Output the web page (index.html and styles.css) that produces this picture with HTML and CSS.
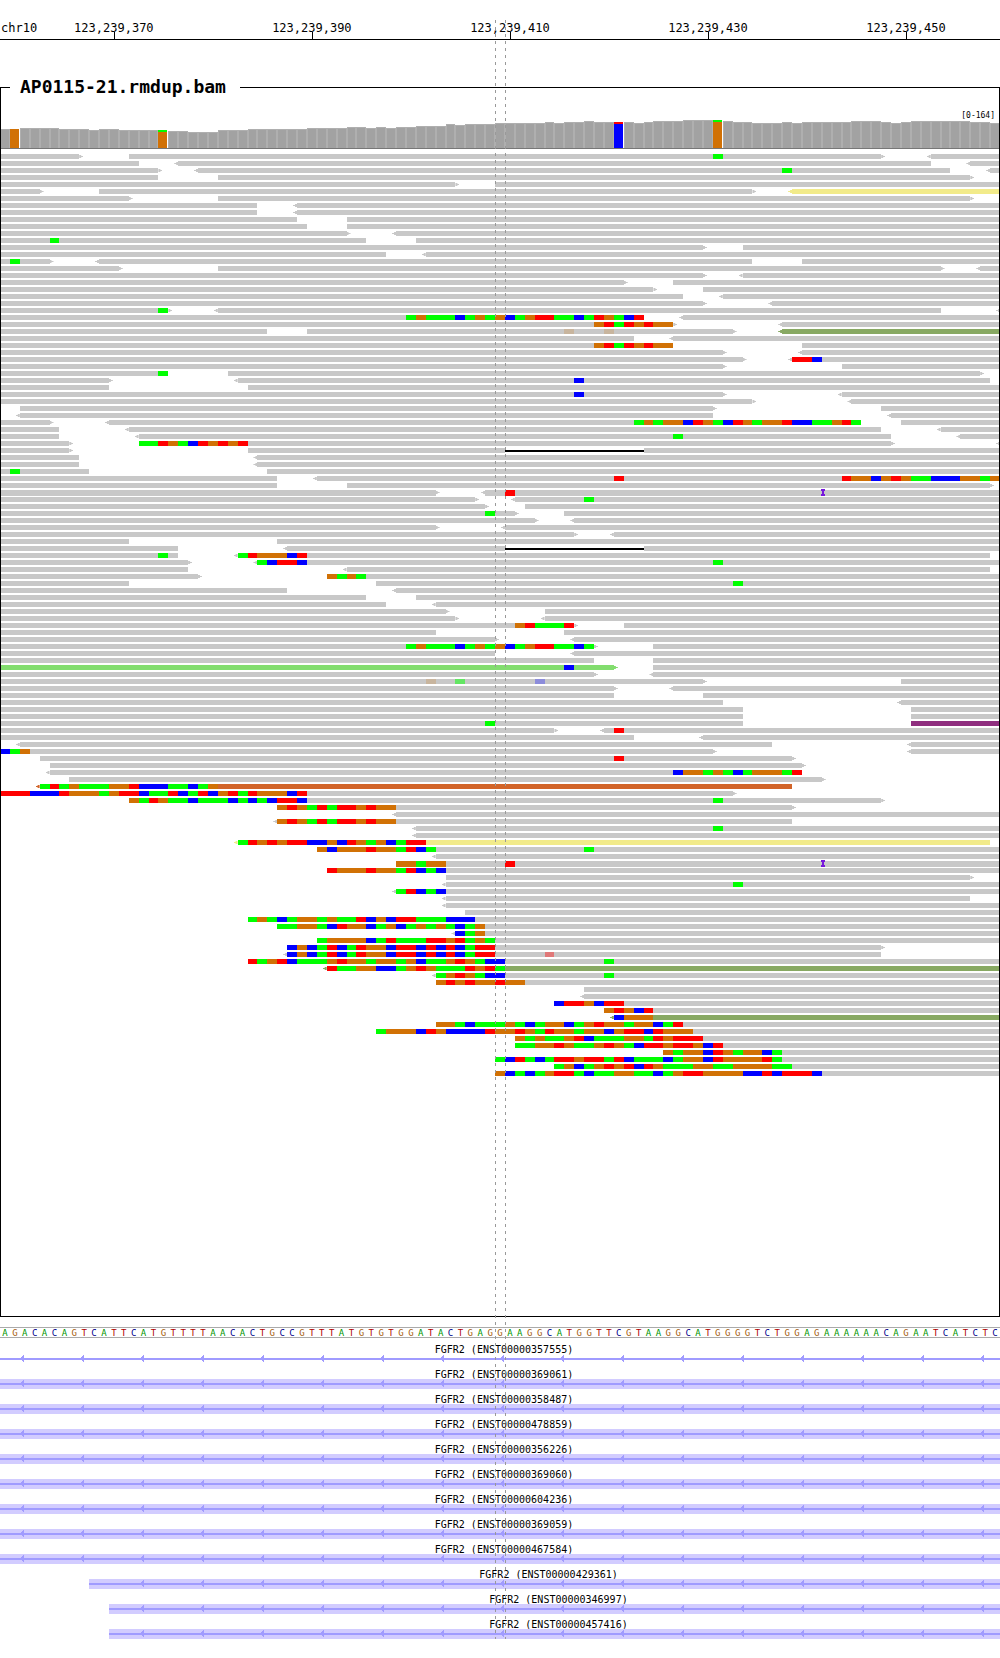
FILE: index.html
```html
<!DOCTYPE html>
<html lang="en">
<head>
<meta charset="utf-8">
<title>AP0115-21.rmdup.bam</title>
<link rel="stylesheet" href="styles.css">
</head>
<body>
<main class="browser">
  <header class="ruler" id="ruler"><span class="chrom">chr10</span></header>
  <fieldset class="track">
    <legend>AP0115-21.rmdup.bam</legend>
    <div class="range">[0-164]</div>
    <div class="coverage columns" id="coverage"></div>
    <div class="lanes" id="lanes"></div>
  </fieldset>
  <div class="sequence columns" id="sequence"></div>
  <section class="genes" id="genes"></section>
  <div class="guide guide-start"></div>
  <div class="guide guide-end"></div>
</main>
<script src="script.js"></script>
</body>
</html>
```
FILE: styles.css
```css
body {
  margin: 0;
  background: #fff;
  color: #000;
  font-family: "DejaVu Sans Mono", monospace;
}

.browser {
  position: relative;
  overflow: hidden;
}

.columns,
.ruler,
.lane {
  display: grid;
  grid-template-columns: repeat(101, minmax(0, 1fr));
}

/* Ruler */
.ruler {
  height: 39px;
  border-bottom: 1px solid #000;
  font-size: 12px;
  line-height: 14px;
}

.chrom,
.tick {
  grid-row: 1;
  padding-top: 21px;
  white-space: nowrap;
}

.chrom {
  grid-column: 1 / 6;
  padding-left: 1px;
}

.tick {
  position: relative;
  display: flex;
  justify-content: center;
}

.tick::after {
  content: "";
  position: absolute;
  left: 50%;
  bottom: 0;
  width: 1px;
  height: 7px;
  background: #000;
}

/* Alignment track */
.track {
  position: relative;
  min-width: 0;
  margin: 37px 0 0;
  padding: 0 0 238px;
  border: solid #000;
  border-width: 1px 0;
}

/* Side borders, reaching up to the line beside the legend */
.track::after {
  content: "";
  position: absolute;
  inset: -10px 0 0;
  border: solid #000;
  border-width: 0 1px;
}

.track legend {
  margin-left: 10px;
  padding: 0 14px 2px 10px;
  font-size: 18px;
  font-weight: bold;
  line-height: 19px;
}

.range {
  height: 22px;
  padding-right: 5px;
  font-size: 8px;
  line-height: 36px;
  text-align: right;
}

.coverage {
  height: 28px;
  align-items: end;
  border-bottom: 1px solid #777;
}

.depth {
  box-sizing: border-box;
  border: solid #afafaf;
  border-width: 1px 1px 0;
  background: #a2a2a2;
}

.depth.variant {
  margin-right: 1px;
  border: 0;
}

.lanes {
  padding-top: 5px;
}

.lane {
  height: 5px;
  margin-bottom: 2px;
}

.lane > * {
  grid-row: 1;
}

.read {
  position: relative;
  background: #c8c8c8;
}

.read.yellow { background: #f2eb8a; }
.read.olive { background: #88a963; }
.read.green { background: #82dd6e; }
.read.purple { background: #8f2e7f; }
.read.orange { background: #d26428; }

.forward::after,
.reverse::before {
  content: "";
  position: absolute;
  top: 1px;
  width: 4px;
  height: 3px;
  background: inherit;
}

.forward::after {
  left: 100%;
  clip-path: polygon(0 0, 2px 0, 2px 1px, 4px 1px, 4px 2px, 2px 2px, 2px 3px, 0 3px);
}

.reverse::before {
  right: 100%;
  clip-path: polygon(4px 0, 2px 0, 2px 1px, 0 1px, 0 2px, 2px 2px, 2px 3px, 4px 3px);
}

.base { position: relative; }
.base-A { background: #00ff00; }
.base-C { background: #0000ff; }
.base-G { background: #d17105; }
.base-T { background: #ff0000; }
.base-a { background: #63e663; }
.base-c { background: #8c8cdb; }
.base-g { background: #c8b59e; }
.base-t { background: #e07878; }

.deletion {
  height: 2px;
  margin-top: 2px;
  background: #000;
}

.insertion {
  position: relative;
  display: block;
  width: 4px;
  height: 7px;
  margin: -1px 0 0 -1px;
  fill: #7719dc;
}

/* Reference sequence */
.sequence {
  margin-top: 10px;
  border: solid #aaa;
  border-width: 1px 0;
  height: 9px;
  font-size: 9px;
  line-height: 10px;
  text-align: center;
}

.letter-A { color: #009600; }
.letter-C { color: #00008b; }
.letter-G { color: #a5600f; }
.letter-T { color: #b00000; }

/* Transcripts */
.genes {
  padding-top: 1px;
}

.transcript-name {
  height: 15px;
  padding-left: 8px;
  font-size: 10px;
  line-height: 22px;
  text-align: center;
  white-space: nowrap;
}

/* Intron line, with strand arrows built from three stacked columns */
.transcript-body {
  height: 10px;
  background:
    linear-gradient(#a09bff, #a09bff) 0 4px / 100% 2px no-repeat,
    linear-gradient(90deg, transparent 21px, #a09bff 21px, #a09bff 24px, transparent 24px) 0 3px / 60px 3px repeat-x,
    linear-gradient(90deg, transparent 22px, #a09bff 22px, #a09bff 24px, transparent 24px) 0 2px / 60px 5px repeat-x,
    linear-gradient(90deg, transparent 23px, #a09bff 23px, #a09bff 24px, transparent 24px) 0 1px / 60px 7px repeat-x;
}

.transcript-body.exon {
  background-color: #d2ccff;
}

/* Dashed guides over the centre base */
.guide {
  position: absolute;
  top: 20px;
  bottom: 0;
  width: 1px;
  background: repeating-linear-gradient(#999 0 3px, transparent 3px 7px);
}

.guide-start { left: calc(100% * 50 / 101); }
.guide-end { left: calc(100% * 51 / 101); }
```
FILE: script.js
```js
const byId = (id) => document.getElementById(id);

function add(parent, className, start, end, text) {
  const el = document.createElement("div");
  el.className = className;
  if (start !== undefined) {
    el.style.gridColumn = `${start + 1} / ${Math.max(end, start + 1) + 1}`;
  }
  if (text) el.textContent = text;
  parent.append(el);
  return el;
}

// Ruler labels, each centred on its base.
[11, 31, 51, 71, 91].forEach((column) => {
  const position = (123239359 + column).toLocaleString("en-US");
  add(byId("ruler"), "tick", column - 6, column + 7, position);
});

// Coverage: runs of [height, number of bases].
const depths = [
  [19, 2], [20, 4], [19, 3], [18, 1], [19, 2], [18, 5], [17, 2], [16, 3], [18, 3],
  [19, 6], [20, 4], [21, 2], [20, 1], [21, 1], [20, 1], [21, 2], [22, 3], [24, 1],
  [23, 1], [24, 3], [25, 5], [26, 1], [25, 1], [26, 2], [27, 1], [26, 4], [25, 1],
  [26, 1], [27, 3], [28, 4], [27, 1], [26, 2], [25, 3], [26, 1], [25, 1], [26, 5],
  [27, 3], [26, 1], [25, 1], [26, 1], [27, 6], [26, 2], [25, 1],
].flatMap(([height, count]) => Array(count).fill(height));

const variants = {
  1: "#d17105",
  16: "linear-gradient(#00ff00 2px, #d17105 2px)",
  62: "linear-gradient(#ff0000 2px, #0000ff 2px)",
  72: "linear-gradient(#00ff00 2px, #d17105 2px)",
};

depths.forEach((height, column) => {
  const bar = add(byId("coverage"), "depth", column, column + 1);
  bar.style.height = `${height}px`;
  if (variants[column]) {
    bar.classList.add("variant");
    bar.style.background = variants[column];
  }
});

// One line per lane. "a-b" is a read, with < or > at its pointed end and an
// optional colour; "n:ACGT" are mismatched bases (lower case: low quality);
// "Da-b" is a deletion and "In" an insertion.
const lanes = `
0-8> 13-89> <94-101 72:A
0-14 <18-94 <98-101
0-16> <20-96 <100-101 79:A
0-16 22-98>
0-46> 50-101
0-4> 10-76> <80-101yellow
0-13> 22-98>
0-26 <30-101
0-26 <30-101
0-30 35-101
0-31 35-101
0-35> <40-101
0-37 42-101 5:A
0-71> 75-101
0-39 <43-101
0-5> <10-76 81-101 1:A
0-12> 22-95> <99-101
0-71> <75-101
0-63> 68-101
0-66> 71-101
0-69 <73-101
0-71> <78-101
0-17> <22-95 <101-101 16:A
0-65 <69-101 41:AGAAACAGAGCAGTTAACATGACT
0-68> <79-101 60:GTATGTGG
0-27 31-74> <79-101olive 57:g 61:g
0-64 <68-101
0-68 81-101 60:GTATGTGG
0-73> <81-101
0-75> <80-101 80:TTC
0-73> 85-101
0-17 23-99> 16:A
0-11> <24-100 58:C
0-11 25-101
0-73> <85-101 58:C
0-76> <86-101
2-72> 89-101
<2-72 <90-101
0-5> <11-87 91-101 64:AGAGGCTGACTGAGGTCCAAGTA
0-6 <13-89 <95-101
0-6 <14-90 <97-101 68:A
0-7> 14-90> <101-101 14:AATGACTGTGT
0-7> 25-51 D51-65 65-101
0-8 <26-101
0-8 <26-101
0-9 27-101 1:A
0-28 <32-101 62:T 85:TGGCGTGAACCCGGAG
0-28 35-100>
0-44> <49-101 51:T I83
0-48> <52-101 59:A
0-49> 53-101
0-52> 57-101 49:A
0-54> <58-101
0-44> <51-101
0-58> <62-101
0-13 28-101
0-18 <29-51 D51-65 65-101
0-18 <24-100 16:A 24:ATGGGCT
0-19> <26-101 26:ACTTC 72:A
0-19 <35-100
0-20> 33-101 33:GAGA
0-13 38-101 74:A
0-29 <40-101
0-37 42-101
0-39 <44-101
0-45> 55-101
0-46> <55-101
0-58> 63-101 52:GTAAAT
0-44 57-101
0-50> <58-101
0-60> 66-101 41:AGAAACAGAGCAGTTAACA
0-50 <58-101
0-60 66-101
0-62>green 66-101 57:C
0-60> <66-101
0-71> 91-101 43:g 46:a 54:c
0-62> <68-101
0-62 71-101
0-73 <91-101
0-75 92-101
0-75 92-101
0-75 92-101purple 49:A
0-56> <61-101 62:T
0-64 <71-101
<2-78 <92-101
0-72> <92-101 0:CAG
4-80> 62:T
5-81>
<5-81 68:CGGAGACAGGGAT
7-83>
<4-80orange 4:ATAGAAAGGTCCCAACAG
0-74> 0:TTTCCCTGGGAGTTCAATCATCGTATGGGCT
13-89> 13:GATGAACAAACACACTTC 72:A
28-80> 28:GTGATATTGTGG
<40-101
<28-80 28:GTGATATTGTGG
<42-101 72:A
<42-101
<24-100yellow 24:ATGTGTTCCGCTGAGCATT
32-101 32:GCGGGTGGATCA 59:A
<44-101
40-101 40:GGAGG 51:T I83
33-101 33:TGGGTGGATCAC
45-98>
<45-101 74:A
<40-101 40:ATCAC
<45-98
<45-101
47-101
25-101 25:AGACAGGAGAATCGCTTAAACCC
28-101 28:AAGGACTGGCAGCAGAGACAG
<46-101 46:CAG
32-101 32:AGGGGCATAAATTGTAGA
29-89> 29:CGCATCATGGCTTCTCTCATT
<29-89 29:CGCATCATGGCTTCTCTCATT 55:t
25-101 25:TAGTCAAAGTGGAGGAGCAAGTGACC 61:A
<33-101olive 33:TAAGGCCAGTGAAATGTA
<44-101 44:AGTGACC 61:A
44-101 44:GTGTGGTGG
59-101
<59-101
56-101 56:CTTGCTT
61-101 61:GTGCT
<62-101olive 62:CGGG
44-101 44:GGACAAAGACAGGCAGTGGAGGCAT
38-101 38:AGGGCTGCCCCTGGTGATGGAGGCGTTCTGGG
52-101 52:GAGAAGTCAAAGGATGTTT
52-101 52:AAGGTGAAGTGACTTGTTGCT
67-101 67:GAGGCTGAGGCA
50-101 50:ACTACATTGTTATCAAACAGGCTGGGGTA
56-101 56:AGCAGTGTCTGAAAGGAAGGGGAA
50-101 50:GCACAGTTACAAGGAACAGTTGGGGCCTCTTTC
`.trim().split("\n");

const insertionMark =
  '<svg class="insertion" viewBox="0 0 4 7"><path d="M0 0h4v2H3v3h1v2H0V5h1V2H0z"/></svg>';

lanes.forEach((line) => {
  const lane = add(byId("lanes"), "lane");
  line.split(" ").forEach((token) => {
    let m;
    if ((m = token.match(/^(\d+):(\w+)$/))) {
      [...m[2]].forEach((base, i) => {
        add(lane, `base base-${base}`, +m[1] + i, +m[1] + i + 1);
      });
    } else if ((m = token.match(/^D(\d+)-(\d+)$/))) {
      add(lane, "deletion", +m[1], +m[2]);
    } else if ((m = token.match(/^I(\d+)$/))) {
      add(lane, "mark", +m[1], +m[1] + 1).innerHTML = insertionMark;
    } else if ((m = token.match(/^(<?)(\d+)-(\d+)(>?)(\w*)$/))) {
      const direction = (m[1] ? " reverse" : "") + (m[4] ? " forward" : "");
      add(lane, `read${direction} ${m[5]}`.trim(), +m[2], +m[3]);
    }
  });
});

// Reference sequence.
[...("AGACACAGTCATTCATGTTTTAACACTGCCGTTTATGTGTGGATACTGAG" +
  "GAAGGCATGGTTCGTAAGGCATGGGGTCTGGAGAAAAAACAGAATCATCTC")].forEach((base, i) => {
  add(byId("sequence"), `letter-${base}`, i, i + 1, base);
});

// Transcripts: [id, first visible base, drawn as exon].
[
  ["357555", 0, false], ["369061", 0, true], ["358487", 0, true],
  ["478859", 0, true], ["356226", 0, true], ["369060", 0, true],
  ["604236", 0, true], ["369059", 0, true], ["467584", 0, true],
  ["429361", 9, true], ["346997", 11, true], ["457416", 11, true],
].forEach(([id, start, exon]) => {
  const offset = `${(start / 101) * 100}%`;
  const row = add(byId("genes"), "transcript");
  const name = add(row, "transcript-name", undefined, undefined, `FGFR2 (ENST00000${id})`);
  name.style.marginLeft = offset;
  const body = add(row, exon ? "transcript-body exon" : "transcript-body");
  body.style.clipPath = `inset(0 0 0 ${offset})`;
});
```
